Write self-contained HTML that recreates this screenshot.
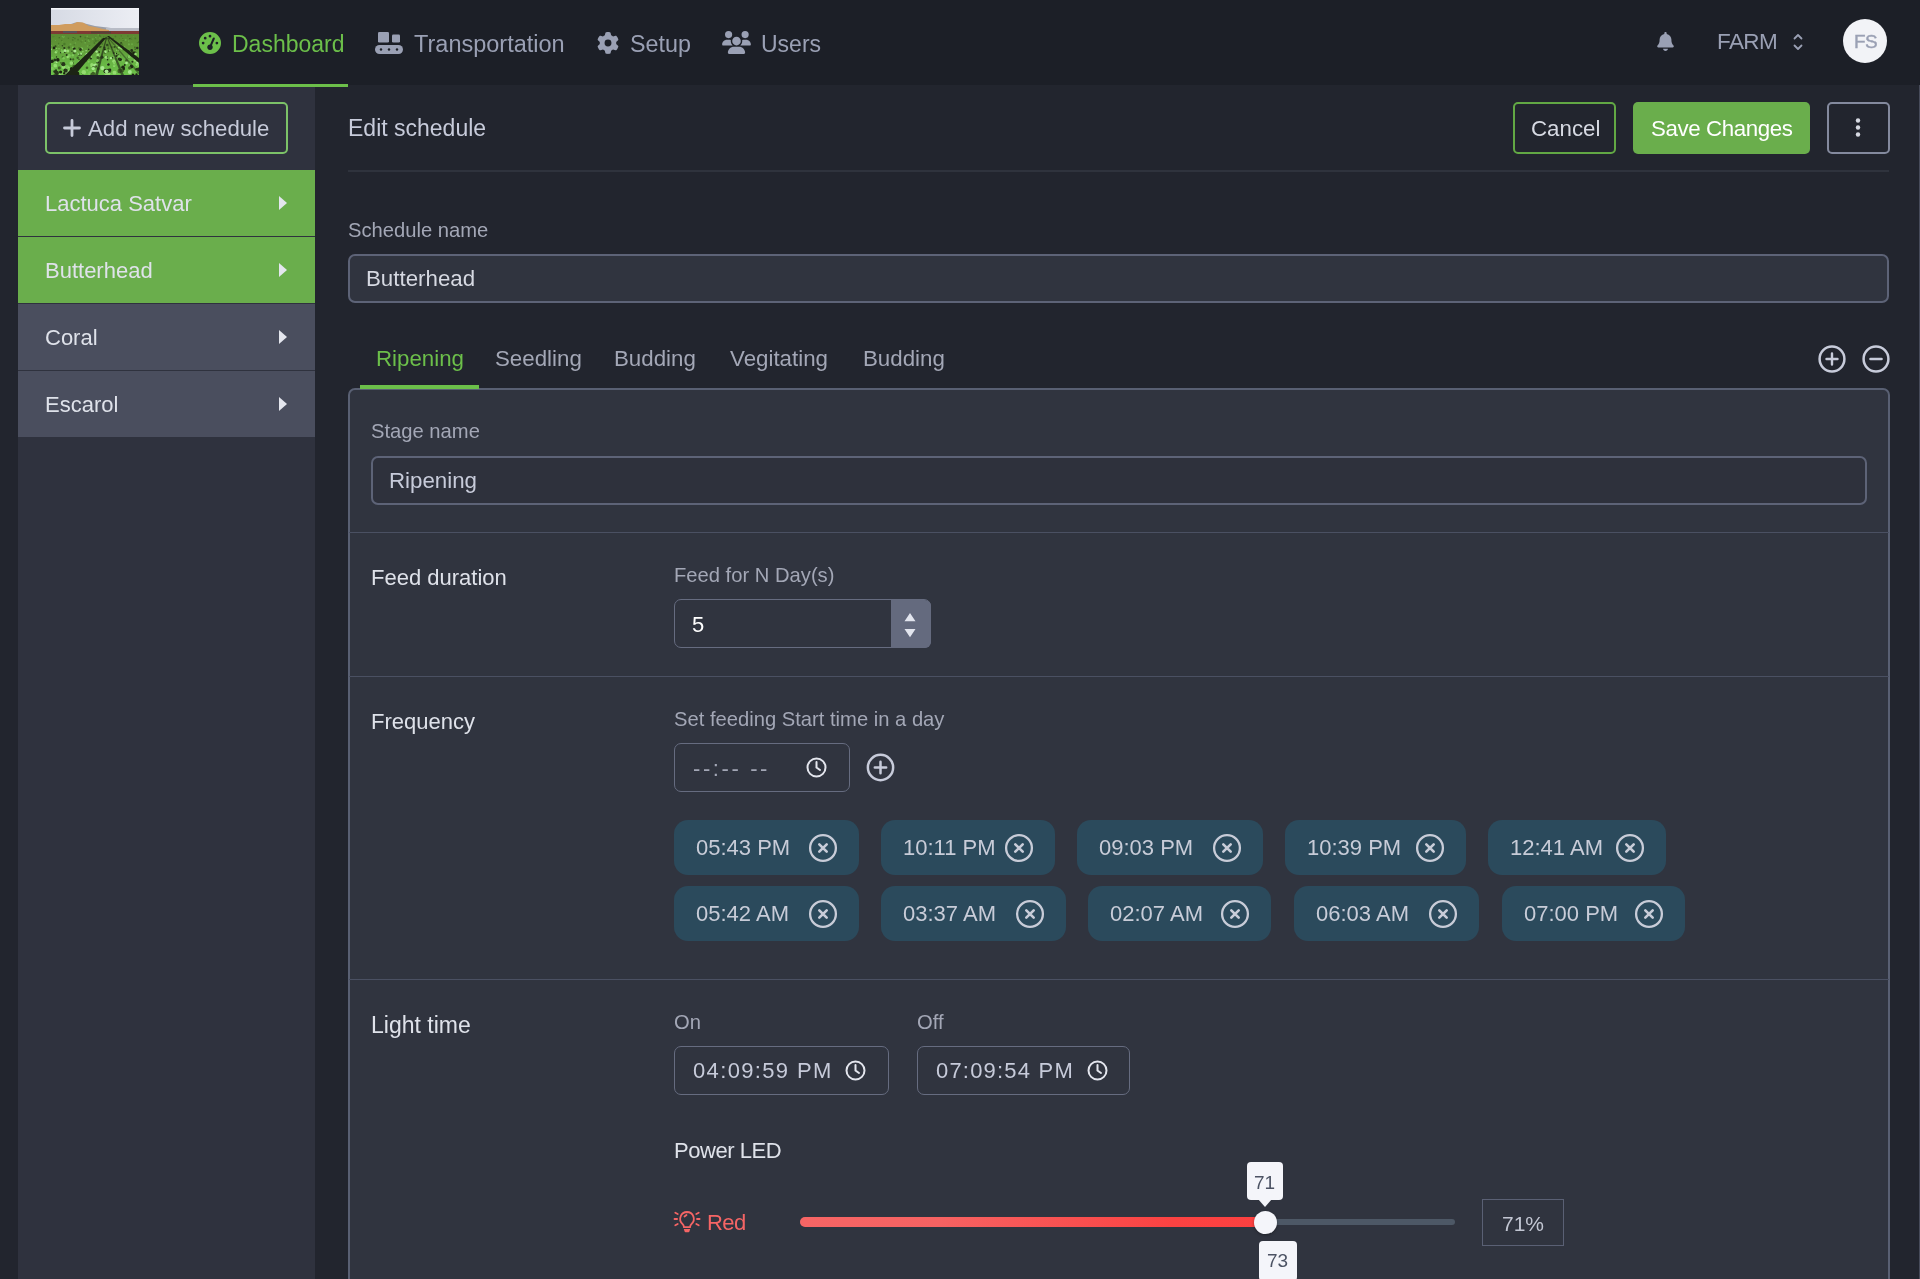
<!DOCTYPE html>
<html><head><meta charset="utf-8">
<style>
*{box-sizing:border-box;margin:0;padding:0}
html,body{width:1920px;height:1279px;overflow:hidden;background:#22252e;font-family:"Liberation Sans",sans-serif;color:#c7cbda}
.a{position:absolute}
.t{position:absolute;white-space:nowrap;line-height:1;-webkit-font-smoothing:antialiased;will-change:transform}
#hdr{left:0;top:0;width:1920px;height:85px;background:#1c1f27}
#side{left:18px;top:85px;width:297px;height:1194px;background:#2f323e}
.btn-o{position:absolute;border:2px solid #7cc268;border-radius:5px}
.item{position:absolute;left:18px;width:297px;height:66px}
.green{background:#6aae4c}
.gray{background:#4a4e5e}
.item .t{left:27px;top:23px;font-size:22px;color:#dfe2ea}
.item svg{position:absolute;left:260px;top:25px}
.inp{position:absolute;border:2px solid #5d6377;border-radius:7px;background:#30343f}
.lbl{font-size:20.2px;color:#a3a7b6}
.sec{font-size:22px;color:#dfe2ea}
.chip{position:absolute;height:55px;background:#2b4a5c;border-radius:14px}
.chip .t{top:17px;left:22px;font-size:22px;color:#c8ccd8}
.chip svg{position:absolute;top:14px}
.div{position:absolute;height:1px;background:#4a5062}
</style></head><body>
<div id="hdr" class="a"></div>
<!-- logo -->
<svg class="a" style="left:51px;top:8px" width="88" height="67" viewBox="0 0 88 67">
<defs>
<linearGradient id="fld" x1="0" y1="0" x2="0" y2="1"><stop offset="0" stop-color="#5a8a32"/><stop offset=".3" stop-color="#5e9436"/><stop offset=".6" stop-color="#66b042"/><stop offset="1" stop-color="#6cc24a"/></linearGradient>
<linearGradient id="sky" x1="0" y1="0" x2="1" y2="0"><stop offset="0" stop-color="#d6dae4"/><stop offset="1" stop-color="#eceef4"/></linearGradient>
</defs>
<rect width="88" height="67" fill="url(#sky)"/>
<rect width="88" height="1.5" fill="#f4f6fa"/>
<path d="M20 16 Q26 13 32 15 L44 18 L60 20 L88 21 L88 27 L20 27Z" fill="#9a9ea8"/>
<path d="M55 20 L88 20 L88 26 L55 26Z" fill="#b8bcc6"/>
<path d="M0 17 L8 17 L14 16 L22 16 L26 14 L32 14.5 L38 18 L44 19 L52 21 L58 22 L58 26 L0 26Z" fill="#d09c5e"/>
<rect y="23" width="88" height="4" fill="#7e3a34"/>
<rect x="12" y="23" width="14" height="2" fill="#4a5868" opacity=".7"/>
<rect x="40" y="23.5" width="20" height="2" fill="#3a4a3a" opacity=".6"/>
<rect y="26" width="88" height="41" fill="url(#fld)"/>
<circle cx="13.3" cy="40.0" r="1.1" fill="#26341a"/><circle cx="8.3" cy="59.9" r="1.6" fill="#3e6224"/><circle cx="7.6" cy="35.6" r="0.8" fill="#4a7a2a"/><circle cx="37.4" cy="30.6" r="0.9" fill="#4a7a2a"/><circle cx="55.5" cy="64.9" r="1.8" fill="#26341a"/><circle cx="34.9" cy="50.1" r="1.8" fill="#26341a"/><circle cx="11.7" cy="49.3" r="1.1" fill="#3e6224"/><circle cx="27.1" cy="31.7" r="0.9" fill="#4a7a2a"/><circle cx="50.3" cy="31.1" r="0.5" fill="#4a7a2a"/><circle cx="5.5" cy="48.9" r="0.7" fill="#1c2412"/><circle cx="46.8" cy="46.9" r="1.4" fill="#94dc70"/><circle cx="39.9" cy="50.4" r="1.0" fill="#1c2412"/><circle cx="21.5" cy="55.0" r="1.5" fill="#3e6224"/><circle cx="30.2" cy="46.8" r="1.1" fill="#3e6224"/><circle cx="10.4" cy="66.2" r="1.6" fill="#7cc85a"/><circle cx="43.0" cy="33.1" r="0.4" fill="#2e4a1c"/><circle cx="49.1" cy="30.1" r="0.8" fill="#6aaa44"/><circle cx="30.8" cy="40.6" r="1.0" fill="#94dc70"/><circle cx="8.2" cy="29.8" r="0.5" fill="#2e4a1c"/><circle cx="5.3" cy="53.6" r="1.6" fill="#a8e890"/><circle cx="59.9" cy="50.1" r="1.2" fill="#a8e890"/><circle cx="58.8" cy="42.4" r="0.6" fill="#94dc70"/><circle cx="53.8" cy="41.2" r="1.0" fill="#1c2412"/><circle cx="11.4" cy="57.7" r="1.1" fill="#94dc70"/><circle cx="43.7" cy="63.7" r="1.1" fill="#94dc70"/><circle cx="77.7" cy="49.0" r="1.6" fill="#3e6224"/><circle cx="36.5" cy="38.1" r="0.8" fill="#6aaa44"/><circle cx="13.3" cy="65.3" r="1.2" fill="#1c2412"/><circle cx="1.1" cy="53.3" r="1.7" fill="#1c2412"/><circle cx="0.4" cy="37.5" r="0.8" fill="#6aaa44"/><circle cx="28.0" cy="51.4" r="0.8" fill="#3e6224"/><circle cx="57.6" cy="65.0" r="2.0" fill="#94dc70"/><circle cx="68.6" cy="63.0" r="2.2" fill="#3e6224"/><circle cx="35.1" cy="42.7" r="0.6" fill="#a8e890"/><circle cx="16.8" cy="43.0" r="1.5" fill="#94dc70"/><circle cx="29.9" cy="33.5" r="0.4" fill="#4a7a2a"/><circle cx="47.2" cy="49.7" r="1.7" fill="#3e6224"/><circle cx="76.9" cy="28.0" r="0.7" fill="#4a7a2a"/><circle cx="84.1" cy="52.4" r="1.4" fill="#94dc70"/><circle cx="74.7" cy="31.9" r="1.0" fill="#6aaa44"/><circle cx="27.4" cy="46.2" r="0.7" fill="#a8e890"/><circle cx="23.3" cy="40.7" r="1.3" fill="#1c2412"/><circle cx="18.1" cy="47.7" r="1.7" fill="#7cc85a"/><circle cx="47.8" cy="32.9" r="0.4" fill="#2e4a1c"/><circle cx="56.6" cy="38.9" r="0.6" fill="#6aaa44"/><circle cx="79.9" cy="47.7" r="1.0" fill="#1c2412"/><circle cx="68.6" cy="48.3" r="1.0" fill="#1c2412"/><circle cx="69.4" cy="51.5" r="1.6" fill="#1c2412"/><circle cx="72.0" cy="59.2" r="1.8" fill="#1c2412"/><circle cx="43.4" cy="35.0" r="1.0" fill="#4a7a2a"/><circle cx="41.6" cy="58.6" r="1.0" fill="#3e6224"/><circle cx="39.4" cy="65.3" r="2.3" fill="#7cc85a"/><circle cx="32.1" cy="65.2" r="1.2" fill="#1c2412"/><circle cx="29.7" cy="45.8" r="1.1" fill="#3e6224"/><circle cx="42.2" cy="60.6" r="1.7" fill="#a8e890"/><circle cx="58.1" cy="30.4" r="0.9" fill="#2e4a1c"/><circle cx="42.1" cy="57.0" r="1.0" fill="#a8e890"/><circle cx="70.5" cy="40.3" r="1.4" fill="#94dc70"/><circle cx="65.4" cy="45.5" r="0.7" fill="#1c2412"/><circle cx="11.2" cy="33.8" r="0.5" fill="#6aaa44"/><circle cx="12.9" cy="59.3" r="2.0" fill="#94dc70"/><circle cx="30.8" cy="53.3" r="1.4" fill="#1c2412"/><circle cx="70.3" cy="27.9" r="0.7" fill="#4a7a2a"/><circle cx="82.2" cy="48.1" r="1.1" fill="#1c2412"/><circle cx="18.6" cy="60.0" r="1.2" fill="#7cc85a"/><circle cx="67.2" cy="47.0" r="1.0" fill="#3e6224"/><circle cx="11.5" cy="43.8" r="1.5" fill="#7cc85a"/><circle cx="58.3" cy="62.9" r="2.1" fill="#3e6224"/><circle cx="80.8" cy="43.8" r="1.1" fill="#3e6224"/><circle cx="44.9" cy="33.1" r="1.0" fill="#4a7a2a"/><circle cx="68.3" cy="51.3" r="0.8" fill="#1c2412"/><circle cx="63.8" cy="45.9" r="1.2" fill="#7cc85a"/><circle cx="46.7" cy="54.3" r="1.3" fill="#26341a"/><circle cx="5.0" cy="62.3" r="1.1" fill="#26341a"/><circle cx="44.7" cy="57.9" r="1.5" fill="#26341a"/><circle cx="53.9" cy="44.7" r="1.1" fill="#3e6224"/><circle cx="24.4" cy="35.0" r="0.8" fill="#6aaa44"/><circle cx="21.8" cy="47.3" r="1.2" fill="#7cc85a"/><circle cx="78.6" cy="63.9" r="1.2" fill="#94dc70"/><circle cx="10.7" cy="32.5" r="0.7" fill="#4a7a2a"/><circle cx="37.7" cy="53.8" r="1.0" fill="#7cc85a"/><circle cx="78.9" cy="58.4" r="1.0" fill="#a8e890"/><circle cx="32.2" cy="52.7" r="1.0" fill="#1c2412"/><circle cx="19.3" cy="65.7" r="2.4" fill="#94dc70"/><circle cx="14.3" cy="62.4" r="1.8" fill="#1c2412"/><circle cx="38.0" cy="33.5" r="0.8" fill="#6aaa44"/><circle cx="31.4" cy="43.9" r="0.6" fill="#7cc85a"/><circle cx="48.8" cy="27.8" r="0.6" fill="#4a7a2a"/><circle cx="45.5" cy="42.4" r="0.8" fill="#26341a"/><circle cx="80.8" cy="31.5" r="0.5" fill="#4a7a2a"/><circle cx="23.9" cy="30.4" r="0.9" fill="#4a7a2a"/><circle cx="11.4" cy="37.8" r="0.8" fill="#2e4a1c"/><circle cx="22.8" cy="59.8" r="1.0" fill="#3e6224"/><circle cx="61.6" cy="49.8" r="0.7" fill="#26341a"/><circle cx="16.1" cy="59.0" r="2.0" fill="#7cc85a"/><circle cx="55.8" cy="64.5" r="2.1" fill="#26341a"/><circle cx="19.6" cy="51.3" r="1.0" fill="#26341a"/><circle cx="29.8" cy="45.2" r="1.1" fill="#7cc85a"/><circle cx="3.8" cy="51.9" r="1.5" fill="#26341a"/><circle cx="23.0" cy="65.8" r="1.2" fill="#7cc85a"/><circle cx="46.7" cy="52.1" r="0.9" fill="#94dc70"/><circle cx="15.7" cy="47.0" r="1.0" fill="#26341a"/><circle cx="3.3" cy="66.8" r="0.9" fill="#3e6224"/><circle cx="16.7" cy="49.0" r="1.2" fill="#94dc70"/><circle cx="72.1" cy="31.3" r="0.6" fill="#6aaa44"/><circle cx="78.2" cy="48.8" r="1.7" fill="#7cc85a"/><circle cx="86.5" cy="54.5" r="1.2" fill="#a8e890"/><circle cx="12.3" cy="56.2" r="2.1" fill="#26341a"/><circle cx="1.3" cy="60.5" r="1.7" fill="#7cc85a"/><circle cx="4.9" cy="44.2" r="1.2" fill="#94dc70"/><circle cx="59.0" cy="61.8" r="1.2" fill="#1c2412"/><circle cx="4.0" cy="54.7" r="1.0" fill="#7cc85a"/><circle cx="23.2" cy="44.8" r="1.5" fill="#3e6224"/><circle cx="3.0" cy="39.9" r="1.3" fill="#1c2412"/><circle cx="0.1" cy="41.3" r="0.9" fill="#94dc70"/><circle cx="57.7" cy="38.2" r="0.7" fill="#4a7a2a"/><circle cx="71.9" cy="30.6" r="0.4" fill="#2e4a1c"/><circle cx="2.0" cy="28.7" r="0.5" fill="#4a7a2a"/><circle cx="84.3" cy="30.4" r="0.9" fill="#4a7a2a"/><circle cx="63.0" cy="53.3" r="1.8" fill="#94dc70"/><circle cx="63.4" cy="57.6" r="1.4" fill="#7cc85a"/><circle cx="56.6" cy="56.0" r="0.8" fill="#a8e890"/><circle cx="55.2" cy="62.7" r="1.9" fill="#3e6224"/><circle cx="46.1" cy="32.6" r="0.7" fill="#4a7a2a"/><circle cx="51.4" cy="60.1" r="2.1" fill="#a8e890"/><circle cx="56.6" cy="65.2" r="1.0" fill="#26341a"/><circle cx="31.7" cy="32.3" r="0.5" fill="#6aaa44"/><circle cx="55.2" cy="49.3" r="1.4" fill="#a8e890"/><circle cx="23.2" cy="36.8" r="0.8" fill="#4a7a2a"/><circle cx="44.3" cy="56.9" r="1.5" fill="#a8e890"/><circle cx="65.6" cy="48.0" r="1.1" fill="#26341a"/><circle cx="20.7" cy="60.8" r="1.9" fill="#1c2412"/><circle cx="85.9" cy="56.6" r="1.4" fill="#94dc70"/><circle cx="80.1" cy="30.1" r="0.5" fill="#4a7a2a"/><circle cx="56.6" cy="51.7" r="0.8" fill="#1c2412"/><circle cx="57.3" cy="40.3" r="1.1" fill="#3e6224"/><circle cx="1.1" cy="49.7" r="0.7" fill="#7cc85a"/><circle cx="8.8" cy="65.9" r="1.2" fill="#94dc70"/><circle cx="45.5" cy="38.6" r="0.9" fill="#6aaa44"/><circle cx="87.4" cy="57.7" r="1.5" fill="#7cc85a"/><circle cx="82.4" cy="66.1" r="0.9" fill="#94dc70"/><circle cx="44.6" cy="30.1" r="1.0" fill="#6aaa44"/><circle cx="80.7" cy="42.5" r="1.4" fill="#26341a"/><circle cx="12.5" cy="50.3" r="1.3" fill="#7cc85a"/><circle cx="72.2" cy="32.3" r="0.7" fill="#4a7a2a"/><circle cx="20.4" cy="55.1" r="1.9" fill="#94dc70"/><circle cx="14.0" cy="42.8" r="1.5" fill="#a8e890"/><circle cx="26.6" cy="45.0" r="0.7" fill="#7cc85a"/><circle cx="10.6" cy="42.0" r="0.8" fill="#7cc85a"/><circle cx="73.8" cy="57.0" r="0.9" fill="#1c2412"/><circle cx="79.3" cy="55.5" r="1.1" fill="#7cc85a"/><circle cx="34.3" cy="29.6" r="0.9" fill="#4a7a2a"/><circle cx="37.7" cy="41.4" r="0.8" fill="#26341a"/><circle cx="4.5" cy="38.2" r="1.0" fill="#2e4a1c"/><circle cx="21.9" cy="64.4" r="1.3" fill="#3e6224"/><circle cx="68.0" cy="39.6" r="1.2" fill="#94dc70"/><circle cx="71.5" cy="62.4" r="1.8" fill="#3e6224"/><circle cx="63.3" cy="49.0" r="0.7" fill="#a8e890"/><circle cx="54.1" cy="43.4" r="0.7" fill="#7cc85a"/><circle cx="80.2" cy="46.4" r="1.2" fill="#1c2412"/><circle cx="30.2" cy="45.9" r="0.9" fill="#a8e890"/><circle cx="57.4" cy="56.5" r="1.3" fill="#1c2412"/><circle cx="49.0" cy="39.0" r="0.8" fill="#1c2412"/><circle cx="6.6" cy="52.7" r="1.3" fill="#94dc70"/><circle cx="39.9" cy="49.0" r="1.0" fill="#94dc70"/><circle cx="48.2" cy="44.1" r="0.8" fill="#1c2412"/><circle cx="8.0" cy="40.7" r="0.7" fill="#7cc85a"/><circle cx="17.8" cy="59.4" r="0.8" fill="#94dc70"/><circle cx="65.6" cy="42.3" r="0.7" fill="#7cc85a"/><circle cx="5.5" cy="40.5" r="0.8" fill="#7cc85a"/><circle cx="44.3" cy="32.0" r="0.8" fill="#4a7a2a"/><circle cx="78.9" cy="30.7" r="0.6" fill="#2e4a1c"/><circle cx="83.9" cy="44.8" r="1.4" fill="#26341a"/><circle cx="37.4" cy="32.1" r="0.9" fill="#6aaa44"/><circle cx="43.1" cy="65.7" r="1.0" fill="#3e6224"/><circle cx="85.6" cy="61.2" r="1.2" fill="#26341a"/><circle cx="13.4" cy="36.0" r="1.2" fill="#4a7a2a"/><circle cx="63.5" cy="64.7" r="1.9" fill="#94dc70"/><circle cx="68.4" cy="30.4" r="0.4" fill="#4a7a2a"/><circle cx="81.0" cy="36.3" r="1.0" fill="#6aaa44"/><circle cx="55.1" cy="65.5" r="1.7" fill="#94dc70"/><circle cx="9.9" cy="54.9" r="0.8" fill="#3e6224"/><circle cx="16.9" cy="64.7" r="1.3" fill="#3e6224"/><circle cx="47.3" cy="27.0" r="0.8" fill="#6aaa44"/><circle cx="56.7" cy="65.4" r="2.3" fill="#94dc70"/><circle cx="48.1" cy="48.1" r="0.6" fill="#94dc70"/><circle cx="27.1" cy="55.2" r="0.8" fill="#94dc70"/><circle cx="57.0" cy="62.4" r="1.0" fill="#1c2412"/><circle cx="81.4" cy="53.7" r="1.0" fill="#26341a"/><circle cx="63.2" cy="54.8" r="1.2" fill="#94dc70"/><circle cx="70.1" cy="34.9" r="1.0" fill="#2e4a1c"/><circle cx="43.6" cy="29.7" r="0.5" fill="#4a7a2a"/><circle cx="19.5" cy="36.2" r="1.0" fill="#6aaa44"/><circle cx="54.9" cy="31.4" r="0.8" fill="#4a7a2a"/><circle cx="80.1" cy="46.4" r="0.7" fill="#3e6224"/><circle cx="34.6" cy="32.9" r="0.5" fill="#2e4a1c"/><circle cx="4.6" cy="32.7" r="0.4" fill="#6aaa44"/><circle cx="62.7" cy="45.0" r="0.9" fill="#26341a"/><circle cx="82.0" cy="66.9" r="1.4" fill="#1c2412"/><circle cx="46.2" cy="53.1" r="1.3" fill="#7cc85a"/><circle cx="33.3" cy="53.6" r="1.2" fill="#7cc85a"/><circle cx="9.6" cy="44.7" r="0.6" fill="#26341a"/><circle cx="84.1" cy="41.1" r="0.6" fill="#1c2412"/><circle cx="67.6" cy="42.2" r="0.8" fill="#94dc70"/><circle cx="62.1" cy="30.5" r="0.5" fill="#2e4a1c"/><circle cx="17.0" cy="63.8" r="1.4" fill="#94dc70"/><circle cx="36.2" cy="28.2" r="0.8" fill="#6aaa44"/><circle cx="3.1" cy="28.6" r="0.4" fill="#4a7a2a"/><circle cx="65.8" cy="37.3" r="1.2" fill="#6aaa44"/><circle cx="29.5" cy="41.5" r="1.4" fill="#26341a"/><circle cx="63.1" cy="37.5" r="0.7" fill="#6aaa44"/><circle cx="63.5" cy="38.9" r="1.0" fill="#2e4a1c"/><circle cx="5.7" cy="64.9" r="2.2" fill="#26341a"/><circle cx="84.2" cy="46.0" r="1.6" fill="#94dc70"/><circle cx="80.4" cy="58.6" r="1.9" fill="#1c2412"/><circle cx="16.1" cy="64.1" r="2.1" fill="#a8e890"/><circle cx="60.9" cy="39.1" r="0.6" fill="#1c2412"/><circle cx="28.1" cy="40.1" r="0.8" fill="#3e6224"/><circle cx="17.4" cy="30.2" r="0.8" fill="#4a7a2a"/><circle cx="57.2" cy="43.3" r="1.0" fill="#3e6224"/><circle cx="86.3" cy="40.0" r="1.3" fill="#26341a"/><circle cx="7.4" cy="37.6" r="0.5" fill="#6aaa44"/><circle cx="85.5" cy="66.5" r="1.2" fill="#1c2412"/><circle cx="54.6" cy="43.7" r="1.2" fill="#a8e890"/><circle cx="68.1" cy="48.5" r="1.5" fill="#7cc85a"/><circle cx="49.9" cy="38.8" r="0.8" fill="#2e4a1c"/><circle cx="38.7" cy="37.4" r="0.6" fill="#4a7a2a"/><circle cx="77.8" cy="33.1" r="0.8" fill="#6aaa44"/><circle cx="22.1" cy="29.6" r="0.5" fill="#2e4a1c"/><circle cx="71.1" cy="36.3" r="1.0" fill="#4a7a2a"/><circle cx="41.8" cy="31.1" r="0.9" fill="#6aaa44"/><circle cx="3.6" cy="63.6" r="1.3" fill="#26341a"/><circle cx="52.8" cy="29.0" r="0.8" fill="#4a7a2a"/><circle cx="32.8" cy="64.2" r="2.2" fill="#94dc70"/><circle cx="68.2" cy="51.1" r="1.5" fill="#26341a"/><circle cx="52.5" cy="31.2" r="0.8" fill="#4a7a2a"/><circle cx="29.9" cy="28.5" r="0.3" fill="#6aaa44"/><circle cx="64.4" cy="28.5" r="0.9" fill="#4a7a2a"/><circle cx="36.0" cy="59.8" r="1.3" fill="#3e6224"/><circle cx="17.9" cy="39.5" r="1.2" fill="#3e6224"/><circle cx="35.9" cy="46.3" r="1.4" fill="#a8e890"/><circle cx="56.2" cy="49.0" r="0.7" fill="#1c2412"/><circle cx="23.9" cy="42.9" r="1.5" fill="#a8e890"/><circle cx="83.9" cy="39.3" r="0.8" fill="#3e6224"/><circle cx="36.4" cy="62.3" r="0.9" fill="#7cc85a"/><circle cx="34.4" cy="52.8" r="1.2" fill="#26341a"/><circle cx="13.8" cy="44.4" r="0.7" fill="#26341a"/><circle cx="77.7" cy="43.2" r="1.0" fill="#1c2412"/><circle cx="4.5" cy="32.2" r="0.5" fill="#6aaa44"/><circle cx="54.8" cy="30.6" r="0.6" fill="#2e4a1c"/><circle cx="30.6" cy="33.9" r="0.5" fill="#4a7a2a"/><circle cx="9.6" cy="64.0" r="1.6" fill="#1c2412"/><circle cx="73.7" cy="39.1" r="0.5" fill="#94dc70"/><circle cx="53.5" cy="39.6" r="1.0" fill="#26341a"/><circle cx="54.6" cy="63.2" r="2.1" fill="#1c2412"/><circle cx="75.4" cy="52.6" r="1.4" fill="#3e6224"/><circle cx="73.0" cy="60.9" r="1.1" fill="#1c2412"/><circle cx="82.6" cy="28.7" r="0.4" fill="#6aaa44"/><circle cx="21.7" cy="31.9" r="0.9" fill="#4a7a2a"/><circle cx="49.5" cy="28.6" r="0.8" fill="#4a7a2a"/><circle cx="28.5" cy="53.7" r="1.2" fill="#94dc70"/><circle cx="55.2" cy="49.0" r="1.0" fill="#94dc70"/><circle cx="21.9" cy="39.3" r="0.8" fill="#7cc85a"/><circle cx="38.6" cy="44.9" r="0.6" fill="#3e6224"/><circle cx="40.9" cy="66.4" r="1.6" fill="#3e6224"/><circle cx="40.3" cy="58.2" r="1.0" fill="#94dc70"/><circle cx="5.9" cy="43.0" r="0.9" fill="#7cc85a"/><circle cx="38.9" cy="30.7" r="0.7" fill="#4a7a2a"/><circle cx="11.5" cy="28.6" r="0.9" fill="#6aaa44"/><circle cx="45.0" cy="58.1" r="0.8" fill="#3e6224"/><circle cx="57.4" cy="62.8" r="2.0" fill="#26341a"/><circle cx="87.7" cy="61.3" r="1.9" fill="#26341a"/><circle cx="86.4" cy="34.7" r="0.8" fill="#4a7a2a"/><circle cx="63.5" cy="54.4" r="1.0" fill="#7cc85a"/><circle cx="22.2" cy="51.4" r="1.1" fill="#3e6224"/><circle cx="71.8" cy="38.0" r="0.6" fill="#2e4a1c"/><circle cx="42.2" cy="65.6" r="1.8" fill="#3e6224"/><circle cx="28.1" cy="47.2" r="0.6" fill="#1c2412"/><circle cx="56.0" cy="43.1" r="0.8" fill="#7cc85a"/><circle cx="14.8" cy="62.8" r="2.0" fill="#26341a"/><circle cx="4.3" cy="57.7" r="1.9" fill="#94dc70"/><circle cx="51.0" cy="49.2" r="1.6" fill="#26341a"/><circle cx="47.1" cy="37.1" r="1.1" fill="#2e4a1c"/><circle cx="23.3" cy="58.9" r="2.2" fill="#3e6224"/><circle cx="29.1" cy="32.8" r="0.4" fill="#4a7a2a"/><circle cx="65.4" cy="34.1" r="0.4" fill="#2e4a1c"/><circle cx="56.3" cy="37.1" r="1.3" fill="#2e4a1c"/><circle cx="78.8" cy="64.1" r="2.0" fill="#a8e890"/><circle cx="13.1" cy="28.4" r="0.7" fill="#6aaa44"/><circle cx="32.0" cy="43.7" r="0.6" fill="#94dc70"/><circle cx="57.5" cy="36.1" r="0.5" fill="#4a7a2a"/><circle cx="26.7" cy="49.7" r="1.2" fill="#3e6224"/><circle cx="51.4" cy="36.0" r="0.9" fill="#4a7a2a"/><circle cx="72.9" cy="41.6" r="0.7" fill="#26341a"/><circle cx="21.4" cy="64.5" r="1.1" fill="#26341a"/><circle cx="12.7" cy="29.5" r="0.7" fill="#6aaa44"/><circle cx="23.3" cy="43.1" r="0.6" fill="#a8e890"/><circle cx="78.6" cy="59.8" r="1.6" fill="#3e6224"/><circle cx="82.5" cy="44.8" r="1.3" fill="#1c2412"/><circle cx="0.0" cy="33.6" r="0.4" fill="#4a7a2a"/><circle cx="20.9" cy="43.2" r="0.6" fill="#26341a"/><circle cx="48.5" cy="27.5" r="0.8" fill="#4a7a2a"/><circle cx="45.6" cy="43.5" r="1.2" fill="#a8e890"/><circle cx="71.6" cy="52.7" r="0.9" fill="#7cc85a"/><circle cx="55.1" cy="29.6" r="0.9" fill="#2e4a1c"/><circle cx="63.0" cy="58.3" r="0.8" fill="#94dc70"/><circle cx="40.9" cy="56.8" r="1.7" fill="#94dc70"/><circle cx="87.7" cy="34.0" r="0.6" fill="#2e4a1c"/><circle cx="29.5" cy="28.6" r="0.8" fill="#2e4a1c"/><circle cx="23.2" cy="64.7" r="0.9" fill="#a8e890"/><circle cx="38.4" cy="49.2" r="1.5" fill="#3e6224"/><circle cx="26.0" cy="65.9" r="2.4" fill="#1c2412"/><circle cx="44.7" cy="30.4" r="0.5" fill="#4a7a2a"/><circle cx="17.8" cy="60.7" r="1.0" fill="#7cc85a"/><circle cx="34.2" cy="34.7" r="0.9" fill="#6aaa44"/><circle cx="55.5" cy="63.3" r="1.9" fill="#a8e890"/><circle cx="47.2" cy="60.7" r="1.5" fill="#3e6224"/><circle cx="75.5" cy="54.9" r="1.3" fill="#a8e890"/><circle cx="77.9" cy="36.4" r="1.1" fill="#6aaa44"/><circle cx="6.8" cy="51.9" r="1.8" fill="#1c2412"/>
<path d="M52 30 L14 67 L24 67 L55 30Z" fill="#1c2414"/>
<path d="M58 28 L88 50 L88 55 L56 28Z" fill="#1c2414"/>
<path d="M55 30 L44 67 L47 67 L56 30Z" fill="#26341a" opacity=".75"/>
<path d="M56 30 L70 67 L73 67 L57 30Z" fill="#26341a" opacity=".7"/>
<path d="M57 29 L88 64 L88 67 L56 29Z" fill="#26341a" opacity=".5"/>
</svg>
<!-- nav -->
<svg class="a" style="left:199px;top:32px" width="22" height="22" viewBox="0 0 512 512"><path fill="#6cbf4a" d="M0 256a256 256 0 1 1 512 0A256 256 0 1 1 0 256zM288 96a32 32 0 1 0 -64 0 32 32 0 1 0 64 0zM256 416c35.3 0 64-28.7 64-64c0-17.4-6.9-33.1-18.1-44.6L366 161.7c5.3-12.1-.2-26.3-12.3-31.6s-26.3 .2-31.6 12.3L257.9 288c-.6 0-1.2 0-1.9 0c-35.3 0-64 28.7-64 64s28.7 64 64 64zM176 144a32 32 0 1 0 -64 0 32 32 0 1 0 64 0zM96 288a32 32 0 1 0 0-64 32 32 0 1 0 0 64zm352-32a32 32 0 1 0 -64 0 32 32 0 1 0 64 0z"/></svg>
<div class="t" style="left:232px;top:33px;font-size:23px;color:#6cbf4a">Dashboard</div>

<svg class="a" style="left:375px;top:31px" width="28" height="23" viewBox="0 0 28 23"><rect x="3" y="1" width="11" height="10.5" rx="1.3" fill="#9aa0b4"/><rect x="17" y="3.5" width="8" height="8" rx="1.3" fill="#9aa0b4"/><rect x="0" y="14" width="28" height="9" rx="4.5" fill="#9aa0b4"/><circle cx="6" cy="18.5" r="1.2" fill="#1c1f27"/><circle cx="14" cy="18.5" r="1.2" fill="#1c1f27"/><circle cx="22" cy="18.5" r="1.2" fill="#1c1f27"/></svg>
<div class="t" style="left:414px;top:33px;font-size:23.5px;color:#9aa0b4">Transportation</div>

<svg class="a" style="left:597px;top:32px" width="22" height="22" viewBox="0 0 512 512"><path fill="#9aa0b4" d="M495.9 166.6c3.2 8.7 .5 18.4-6.4 24.6l-43.3 39.4c1.1 8.3 1.7 16.8 1.7 25.4s-.6 17.1-1.7 25.4l43.3 39.4c6.9 6.2 9.6 15.9 6.4 24.6c-4.4 11.9-9.7 23.3-15.8 34.3l-4.7 8.1c-6.6 11-14 21.4-22.1 31.2c-5.900 7.2-15.7 9.6-24.5 6.8l-55.7-17.7c-13.4 10.3-28.2 18.9-44 25.4l-12.5 57.1c-2 9.1-9 16.3-18.2 17.8c-13.8 2.3-28 3.5-42.5 3.5s-28.7-1.2-42.5-3.5c-9.2-1.5-16.2-8.7-18.2-17.8l-12.5-57.1c-15.8-6.5-30.6-15.1-44-25.4L83.1 425.9c-8.8 2.8-18.6 .3-24.5-6.8c-8.1-9.8-15.5-20.2-22.1-31.2l-4.7-8.1c-6.1-11-11.4-22.4-15.8-34.3c-3.2-8.7-.5-18.4 6.4-24.6l43.3-39.4C64.6 273.1 64 264.6 64 256s.6-17.1 1.7-25.4L22.4 191.2c-6.9-6.2-9.6-15.9-6.4-24.6c4.4-11.9 9.7-23.3 15.8-34.3l4.7-8.1c6.6-11 14-21.4 22.1-31.2c5.9-7.2 15.7-9.6 24.5-6.8l55.7 17.7c13.4-10.3 28.2-18.9 44-25.4l12.5-57.1c2-9.1 9-16.3 18.2-17.8C227.3 1.2 241.5 0 256 0s28.7 1.2 42.5 3.5c9.2 1.5 16.2 8.7 18.2 17.8l12.5 57.1c15.8 6.5 30.6 15.1 44 25.4l55.7-17.7c8.8-2.8 18.6-.3 24.5 6.8c8.1 9.8 15.5 20.2 22.1 31.2l4.7 8.1c6.1 11 11.4 22.4 15.8 34.3zM256 336a80 80 0 1 0 0-160 80 80 0 1 0 0 160z"/></svg>
<div class="t" style="left:630px;top:33px;font-size:23.3px;color:#9aa0b4">Setup</div>

<svg class="a" style="left:722px;top:31px" width="29" height="23" viewBox="0 0 640 512"><path fill="#9aa0b4" d="M144 0a80 80 0 1 1 0 160A80 80 0 1 1 144 0zM512 0a80 80 0 1 1 0 160A80 80 0 1 1 512 0zM0 298.7C0 239.8 47.8 192 106.7 192h42.7c15.9 0 31 3.5 44.6 9.7c-1.3 7.2-1.9 14.7-1.9 22.3c0 38.2 16.8 72.5 43.3 96c-.2 0-.4 0-.7 0H21.3C9.6 320 0 310.4 0 298.7zM405.3 320c-.2 0-.4 0-.7 0c26.6-23.5 43.3-57.8 43.3-96c0-7.6-.7-15-1.9-22.3c13.6-6.3 28.7-9.700 44.6-9.7h42.7C592.2 192 640 239.8 640 298.7c0 11.8-9.6 21.3-21.3 21.3H405.3zM224 224a96 96 0 1 1 192 0 96 96 0 1 1 -192 0zM128 485.3C128 411.7 187.7 352 261.3 352H378.7C452.3 352 512 411.7 512 485.3c0 14.7-11.9 26.7-26.7 26.7H154.7c-14.7 0-26.7-11.9-26.7-26.7z"/></svg>
<div class="t" style="left:761px;top:33px;font-size:23px;color:#9aa0b4">Users</div>

<svg class="a" style="left:1657px;top:32px" width="17" height="19" viewBox="0 0 448 512"><path fill="#9aa0b4" d="M224 0c-17.7 0-32 14.3-32 32V51.2C119 66 64 130.6 64 208v18.8c0 47-17.3 92.4-48.5 127.6l-7.4 8.3c-8.4 9.4-10.4 22.9-5.300 34.4S19.4 416 32 416H416c12.6 0 24-7.4 29.2-18.9s3.1-25-5.3-34.4l-7.4-8.3C401.3 319.2 384 273.9 384 226.8V208c0-77.4-55-142-128-156.8V32c0-17.7-14.3-32-32-32zm45.3 493.3c12-12 18.7-28.3 18.7-45.3H224 160c0 17 6.7 33.3 18.700 45.3s28.3 18.7 45.3 18.7s33.3-6.7 45.3-18.7z"/></svg>
<div class="t" style="left:1717px;top:31px;font-size:22.5px;color:#9aa0b4;letter-spacing:-0.6px">FARM</div>
<svg class="a" style="left:1791px;top:32px" width="14" height="20" viewBox="0 0 14 20"><path d="M3.5 6.5 L7 3 L10.5 6.5 M3.5 13.5 L7 17 L10.5 13.5" stroke="#9aa0b4" stroke-width="1.8" fill="none" stroke-linecap="round" stroke-linejoin="round"/></svg>
<div class="a" style="left:1843px;top:19px;width:44px;height:44px;border-radius:50%;background:#f2f3f7"></div>
<div class="t" style="left:1854px;top:32px;font-size:19px;color:#9aa0b4;letter-spacing:-0.5px;-webkit-text-stroke:0.4px #9aa0b4">FS</div>

<!-- sidebar -->
<div id="side" class="a"></div>
<div class="btn-o" style="left:45px;top:102px;width:243px;height:52px"></div>
<svg class="a" style="left:63px;top:119px" width="18" height="18" viewBox="0 0 18 18"><path d="M9 1.5V16.5M1.5 9H16.5" stroke="#c7cbda" stroke-width="2.8" stroke-linecap="round"/></svg>
<div class="t" style="left:88px;top:118px;font-size:22.2px;color:#c7cbda">Add new schedule</div>

<div class="item green" style="top:170px"><div class="t">Lactuca Satvar</div><svg width="10" height="16" viewBox="0 0 10 16"><path d="M1 1 L9 8 L1 15Z" fill="#e4e6ee"/></svg></div>
<div class="item green" style="top:237px"><div class="t">Butterhead</div><svg width="10" height="16" viewBox="0 0 10 16"><path d="M1 1 L9 8 L1 15Z" fill="#e4e6ee"/></svg></div>
<div class="item gray" style="top:304px"><div class="t">Coral</div><svg width="10" height="16" viewBox="0 0 10 16"><path d="M1 1 L9 8 L1 15Z" fill="#e4e6ee"/></svg></div>
<div class="item gray" style="top:371px"><div class="t">Escarol</div><svg width="10" height="16" viewBox="0 0 10 16"><path d="M1 1 L9 8 L1 15Z" fill="#e4e6ee"/></svg></div>

<div class="a" style="left:193px;top:84px;width:155px;height:3px;background:#6cbf4a"></div>
<!-- main header -->
<div class="t" style="left:348px;top:117px;font-size:23px;color:#c7cbda">Edit schedule</div>
<div class="btn-o" style="left:1513px;top:102px;width:103px;height:52px;border-width:2px;border-color:#62a844"></div>
<div class="t" style="left:1531px;top:118px;font-size:22.3px;color:#d6d9e2">Cancel</div>
<div class="a" style="left:1633px;top:102px;width:177px;height:52px;border-radius:5px;background:#6aae4c"></div>
<div class="t" style="left:1651px;top:118px;font-size:22.3px;color:#fff;letter-spacing:-0.4px">Save Changes</div>
<div class="btn-o" style="left:1827px;top:102px;width:63px;height:52px;border-width:2px;border-color:#848a9e"></div>
<svg class="a" style="left:1854px;top:117px" width="8" height="22" viewBox="0 0 8 22"><circle cx="4" cy="3.5" r="2.2" fill="#d6d9e2"/><circle cx="4" cy="10.5" r="2.2" fill="#d6d9e2"/><circle cx="4" cy="17.5" r="2.2" fill="#d6d9e2"/></svg>
<div class="a" style="left:348px;top:170px;width:1541px;height:2px;background:#2f333d"></div>

<div class="t lbl" style="left:348px;top:220px">Schedule name</div>
<div class="inp" style="left:348px;top:254px;width:1541px;height:49px"></div>
<div class="t" style="left:366px;top:268px;font-size:22.3px;color:#d6d9e2">Butterhead</div>

<!-- tabs -->
<div class="t" style="left:376px;top:348px;font-size:22.3px;color:#6cbf4a">Ripening</div>
<div class="t" style="left:495px;top:348px;font-size:22.3px;color:#a3a7b6">Seedling</div>
<div class="t" style="left:614px;top:348px;font-size:22.3px;color:#a3a7b6">Budding</div>
<div class="t" style="left:730px;top:348px;font-size:22.3px;color:#a3a7b6">Vegitating</div>
<div class="t" style="left:863px;top:348px;font-size:22.3px;color:#a3a7b6">Budding</div>
<svg class="a" style="left:1818px;top:345px" width="28" height="28" viewBox="0 0 28 28"><circle cx="14" cy="14" r="12.4" stroke="#c7cbda" stroke-width="2.5" fill="none"/><path d="M14 8.5V19.5M8.5 14H19.5" stroke="#c7cbda" stroke-width="2.4" stroke-linecap="round"/></svg>
<svg class="a" style="left:1862px;top:345px" width="28" height="28" viewBox="0 0 28 28"><circle cx="14" cy="14" r="12.4" stroke="#c7cbda" stroke-width="2.5" fill="none"/><path d="M8.5 14H19.5" stroke="#c7cbda" stroke-width="2.6" stroke-linecap="round"/></svg>

<!-- card -->
<div class="a" style="left:348px;top:388px;width:1542px;height:900px;background:#30343f;border:2px solid #596073;border-radius:7px"></div>
<div class="a" style="left:360px;top:385px;width:119px;height:3.5px;background:#6cbf4a"></div>

<div class="t lbl" style="left:371px;top:421px">Stage name</div>
<div class="inp" style="left:371px;top:456px;width:1496px;height:49px;background:#2e313c"></div>
<div class="t" style="left:389px;top:470px;font-size:22.3px;color:#c7cbda">Ripening</div>
<div class="div" style="left:349px;top:532px;width:1540px"></div>

<div class="t sec" style="left:371px;top:567px">Feed duration</div>
<div class="t lbl" style="left:674px;top:565px">Feed for N Day(s)</div>
<div class="inp" style="left:674px;top:599px;width:257px;height:49px;background:#30343f;border:1.5px solid #666c80"></div>
<div class="a" style="left:891px;top:600px;width:40px;height:48px;background:#646a7e;border-radius:0 6px 6px 0"></div>
<svg class="a" style="left:903px;top:612px" width="14" height="26" viewBox="0 0 14 26"><path d="M1.5 9.2 L7 1 L12.5 9.2Z M1.5 17 L7 25.2 L12.5 17Z" fill="#e2e5ee"/></svg>
<div class="t" style="left:692px;top:614px;font-size:22px;color:#fff">5</div>
<div class="div" style="left:349px;top:676px;width:1540px"></div>

<div class="t sec" style="left:371px;top:711px">Frequency</div>
<div class="t lbl" style="left:674px;top:709px">Set feeding Start time in a day</div>
<div class="inp" style="left:674px;top:743px;width:176px;height:49px;background:#30343f;border:1.5px solid #666c80"></div>
<div class="t" style="left:693px;top:758px;font-size:22px;color:#a3a7b6;letter-spacing:2.6px">--:-- --</div>
<svg class="a" style="left:806px;top:757px" width="21" height="21" viewBox="0 0 21 21"><circle cx="10.5" cy="10.5" r="9" stroke="#e4e6ee" stroke-width="2" fill="none"/><path d="M10.5 5V10.5L14 13" stroke="#e4e6ee" stroke-width="2" fill="none" stroke-linecap="round"/></svg>
<svg class="a" style="left:866px;top:753px" width="29" height="29" viewBox="0 0 28 28"><circle cx="14" cy="14" r="12.2" stroke="#c7cbda" stroke-width="2.4" fill="none"/><path d="M14 8.5V19.5M8.5 14H19.5" stroke="#c7cbda" stroke-width="2.4" stroke-linecap="round"/></svg>

<div class="chip" style="left:674px;top:820px;width:185px"><div class="t">05:43 PM</div><svg style="left:134px;top:13px" width="30" height="30" viewBox="0 0 30 30"><circle cx="15" cy="15" r="12.9" stroke="#c8ccd8" stroke-width="2.3" fill="none"/><path d="M11.3 11.3L18.7 18.7M18.7 11.3L11.3 18.7" stroke="#c8ccd8" stroke-width="2.6" stroke-linecap="round"/></svg></div>
<div class="chip" style="left:881px;top:820px;width:174px"><div class="t">10:11 PM</div><svg style="left:123px;top:13px" width="30" height="30" viewBox="0 0 30 30"><circle cx="15" cy="15" r="12.9" stroke="#c8ccd8" stroke-width="2.3" fill="none"/><path d="M11.3 11.3L18.7 18.7M18.7 11.3L11.3 18.7" stroke="#c8ccd8" stroke-width="2.6" stroke-linecap="round"/></svg></div>
<div class="chip" style="left:1077px;top:820px;width:186px"><div class="t">09:03 PM</div><svg style="left:135px;top:13px" width="30" height="30" viewBox="0 0 30 30"><circle cx="15" cy="15" r="12.9" stroke="#c8ccd8" stroke-width="2.3" fill="none"/><path d="M11.3 11.3L18.7 18.7M18.7 11.3L11.3 18.7" stroke="#c8ccd8" stroke-width="2.6" stroke-linecap="round"/></svg></div>
<div class="chip" style="left:1285px;top:820px;width:181px"><div class="t">10:39 PM</div><svg style="left:130px;top:13px" width="30" height="30" viewBox="0 0 30 30"><circle cx="15" cy="15" r="12.9" stroke="#c8ccd8" stroke-width="2.3" fill="none"/><path d="M11.3 11.3L18.7 18.7M18.7 11.3L11.3 18.7" stroke="#c8ccd8" stroke-width="2.6" stroke-linecap="round"/></svg></div>
<div class="chip" style="left:1488px;top:820px;width:178px"><div class="t">12:41 AM</div><svg style="left:127px;top:13px" width="30" height="30" viewBox="0 0 30 30"><circle cx="15" cy="15" r="12.9" stroke="#c8ccd8" stroke-width="2.3" fill="none"/><path d="M11.3 11.3L18.7 18.7M18.7 11.3L11.3 18.7" stroke="#c8ccd8" stroke-width="2.6" stroke-linecap="round"/></svg></div>
<div class="chip" style="left:674px;top:886px;width:185px"><div class="t">05:42 AM</div><svg style="left:134px;top:13px" width="30" height="30" viewBox="0 0 30 30"><circle cx="15" cy="15" r="12.9" stroke="#c8ccd8" stroke-width="2.3" fill="none"/><path d="M11.3 11.3L18.7 18.7M18.7 11.3L11.3 18.7" stroke="#c8ccd8" stroke-width="2.6" stroke-linecap="round"/></svg></div>
<div class="chip" style="left:881px;top:886px;width:185px"><div class="t">03:37 AM</div><svg style="left:134px;top:13px" width="30" height="30" viewBox="0 0 30 30"><circle cx="15" cy="15" r="12.9" stroke="#c8ccd8" stroke-width="2.3" fill="none"/><path d="M11.3 11.3L18.7 18.7M18.7 11.3L11.3 18.7" stroke="#c8ccd8" stroke-width="2.6" stroke-linecap="round"/></svg></div>
<div class="chip" style="left:1088px;top:886px;width:183px"><div class="t">02:07 AM</div><svg style="left:132px;top:13px" width="30" height="30" viewBox="0 0 30 30"><circle cx="15" cy="15" r="12.9" stroke="#c8ccd8" stroke-width="2.3" fill="none"/><path d="M11.3 11.3L18.7 18.7M18.7 11.3L11.3 18.7" stroke="#c8ccd8" stroke-width="2.6" stroke-linecap="round"/></svg></div>
<div class="chip" style="left:1294px;top:886px;width:185px"><div class="t">06:03 AM</div><svg style="left:134px;top:13px" width="30" height="30" viewBox="0 0 30 30"><circle cx="15" cy="15" r="12.9" stroke="#c8ccd8" stroke-width="2.3" fill="none"/><path d="M11.3 11.3L18.7 18.7M18.7 11.3L11.3 18.7" stroke="#c8ccd8" stroke-width="2.6" stroke-linecap="round"/></svg></div>
<div class="chip" style="left:1502px;top:886px;width:183px"><div class="t">07:00 PM</div><svg style="left:132px;top:13px" width="30" height="30" viewBox="0 0 30 30"><circle cx="15" cy="15" r="12.9" stroke="#c8ccd8" stroke-width="2.3" fill="none"/><path d="M11.3 11.3L18.7 18.7M18.7 11.3L11.3 18.7" stroke="#c8ccd8" stroke-width="2.6" stroke-linecap="round"/></svg></div>
<div class="div" style="left:349px;top:979px;width:1540px"></div>

<div class="t sec" style="left:371px;top:1014px;font-size:23px">Light time</div>
<div class="t lbl" style="left:674px;top:1012px">On</div>
<div class="t lbl" style="left:917px;top:1012px">Off</div>
<div class="inp" style="left:674px;top:1046px;width:215px;height:49px;background:#30343f;border:1.5px solid #666c80"></div>
<div class="t" style="left:693px;top:1060px;font-size:22px;color:#c7cbda;letter-spacing:1.35px">04:09:59 PM</div>
<svg class="a" style="left:845px;top:1060px" width="21" height="21" viewBox="0 0 21 21"><circle cx="10.5" cy="10.5" r="9" stroke="#e4e6ee" stroke-width="2" fill="none"/><path d="M10.5 5V10.5L14 13" stroke="#e4e6ee" stroke-width="2" fill="none" stroke-linecap="round"/></svg>
<div class="inp" style="left:917px;top:1046px;width:213px;height:49px;background:#30343f;border:1.5px solid #666c80"></div>
<div class="t" style="left:936px;top:1060px;font-size:22px;color:#c7cbda;letter-spacing:1.2px">07:09:54 PM</div>
<svg class="a" style="left:1087px;top:1060px" width="21" height="21" viewBox="0 0 21 21"><circle cx="10.5" cy="10.5" r="9" stroke="#e4e6ee" stroke-width="2" fill="none"/><path d="M10.5 5V10.5L14 13" stroke="#e4e6ee" stroke-width="2" fill="none" stroke-linecap="round"/></svg>

<div class="t sec" style="left:674px;top:1140px;letter-spacing:-0.45px">Power LED</div>
<svg class="a" style="left:673px;top:1210px" width="28" height="25" viewBox="0 0 28 25"><g stroke="#f56565" stroke-width="1.8" fill="none" stroke-linecap="round"><path d="M14 2a6.8 6.8 0 0 0-4.6 11.8c.9.9 1.5 2 1.6 3.4h6c.1-1.4.7-2.5 1.6-3.4A6.8 6.8 0 0 0 14 2Z"/><path d="M11.5 6.5l2-1.5" /><path d="M1.5 9h2.6M24 9h2.6M2.3 2.7l2.4 1.3M25.7 2.7l-2.4 1.3M2.3 15.3l2.4-1.3M25.7 15.3l-2.4-1.3"/></g><path d="M10.8 19h6.4l-.8 2.6a1 1 0 0 1-1 .7h-2.8a1 1 0 0 1-1-.7Z" fill="#f56565"/></svg>
<div class="t" style="left:707px;top:1212px;font-size:22px;color:#f56565;letter-spacing:-0.6px">Red</div>
<div class="a" style="left:800px;top:1219px;width:655px;height:6px;border-radius:3px;background:#4d5866"></div>
<div class="a" style="left:800px;top:1217px;width:465px;height:10px;border-radius:5px;background:linear-gradient(90deg,#f76565 0%,#f76262 30%,#f94f4f 60%,#fb4242 80%,#fc4040 100%)"></div>
<div class="a" style="left:1254px;top:1211px;width:23px;height:23px;border-radius:50%;background:#f4f5fa;box-shadow:0 1px 3px rgba(0,0,0,.35)"></div>
<div class="a" style="left:1247px;top:1162px;width:36px;height:38px;border-radius:4px;background:#f4f5fa"></div>
<div class="a" style="left:1258px;top:1199px;width:0;height:0;border-left:7px solid transparent;border-right:7px solid transparent;border-top:8px solid #f4f5fa"></div>
<div class="t" style="left:1254px;top:1173px;font-size:19px;color:#4c5364">71</div>
<div class="a" style="left:1259px;top:1241px;width:38px;height:40px;border-radius:4px;background:#f4f5fa"></div>
<div class="t" style="left:1267px;top:1251px;font-size:19px;color:#4c5364">73</div>
<div class="a" style="left:1482px;top:1199px;width:82px;height:47px;border:1.5px solid #5a6074"></div>
<div class="t" style="left:1502px;top:1213px;font-size:21px;color:#c2c6d2">71%</div>
<div class="a" style="left:1919px;top:85px;width:1px;height:1194px;background:#474b5a"></div>
</body></html>
